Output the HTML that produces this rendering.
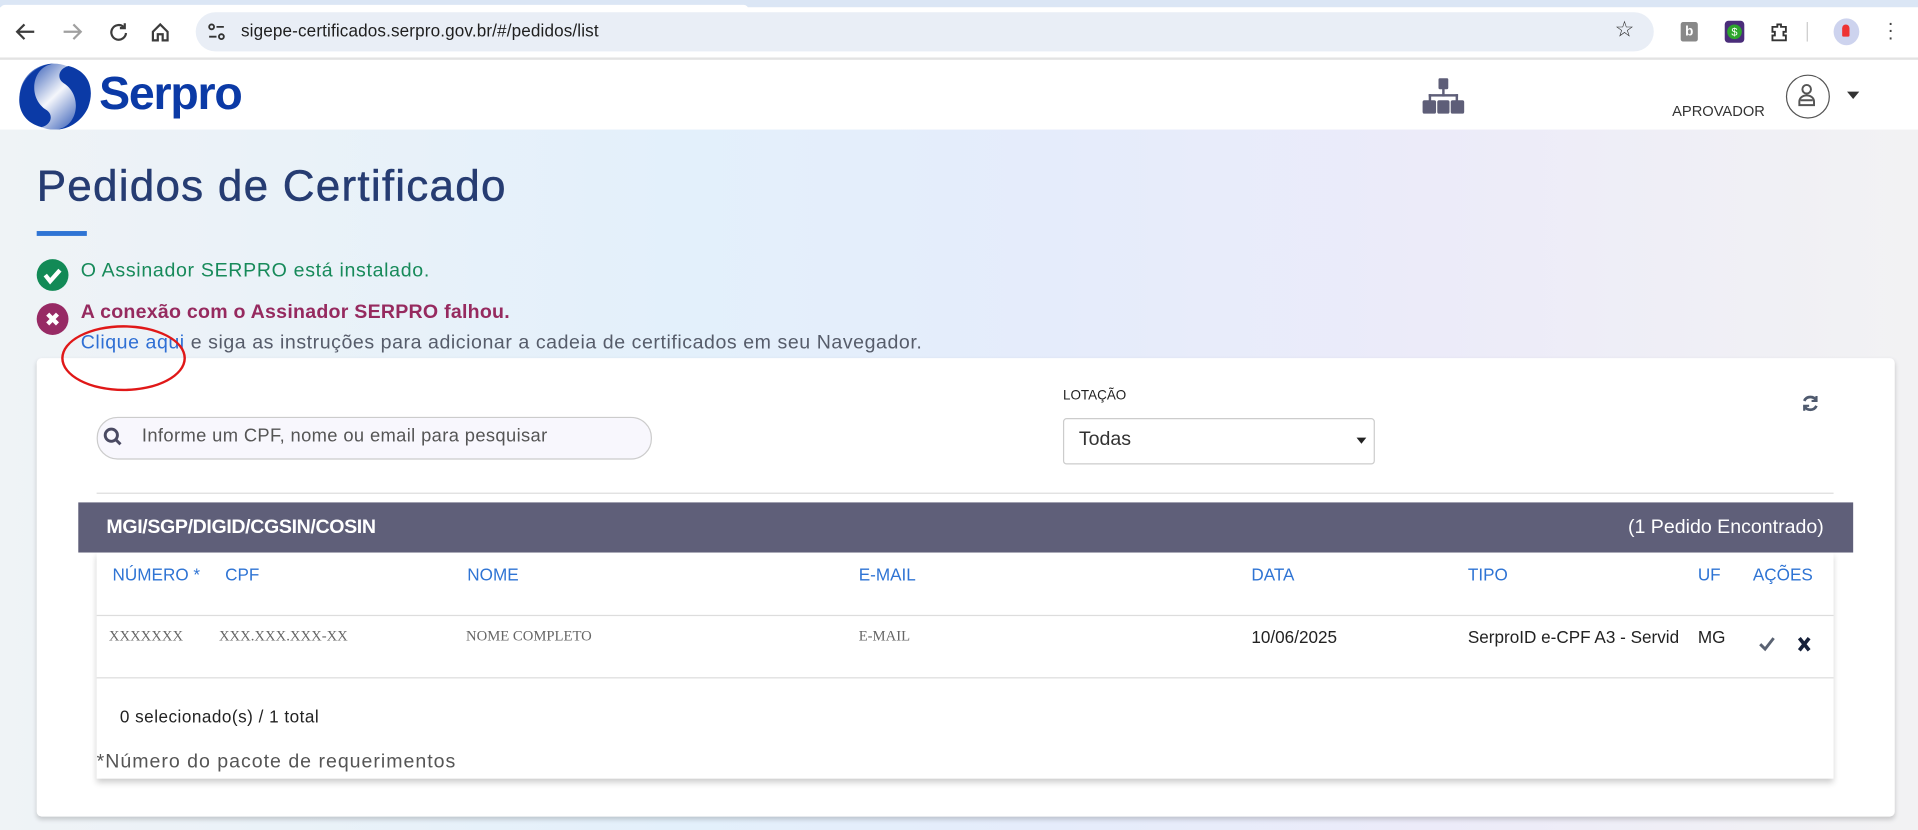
<!DOCTYPE html>
<html><head><meta charset="utf-8"><style>
html,body{margin:0;padding:0;width:1918px;height:830px;overflow:hidden;background:#fff}
#w{position:absolute;left:0;top:0;width:1568px;height:679px;transform:scale(1.22321,1.2224);transform-origin:0 0;font-family:"Liberation Sans",sans-serif;overflow:hidden}
.a{position:absolute;white-space:nowrap}
</style></head><body><div id="w">
<div class="a" style="left:0;top:0;width:1568px;height:6px;background:#dbe6f5"></div>
<div class="a" style="left:0;top:4px;width:612px;height:4px;background:#fff;border-radius:6px 6px 0 0"></div>
<div class="a" style="left:0;top:6px;width:1568px;height:42px;background:#fff"></div>
<div class="a" style="left:0;top:47px;width:1568px;height:2px;background:#e3e3e3"></div>
<svg class="a" style="left:10px;top:14px" width="140" height="24" viewBox="0 0 140 24" fill="none" stroke="#3c3c3c" stroke-width="1.8">
<path d="M18 12H5M10 6L4 12l6 6"/>
<path d="M42 12h13M50 6l6 6-6 6" stroke="#a0a0a0"/>
<path d="M91 8a6 6 0 1 0 2 5M92 5v4h-4"/>
<path d="M115 12l6-6 6 6v7h-4v-5h-4v5h-4z"/>
</svg>
<div class="a" style="left:160px;top:10px;width:1192px;height:32px;border-radius:16px;background:#e9eef6"></div>
<svg class="a" style="left:169px;top:18px" width="16" height="16" viewBox="0 0 16 16" fill="none" stroke="#333" stroke-width="1.5"><circle cx="4" cy="4" r="2"/><path d="M8 4h6M2 12h6"/><circle cx="12" cy="12" r="2"/></svg>
<div class="a" style="left:197px;top:17px;font-size:14px;color:#1f1f1f;letter-spacing:0.1px">sigepe-certificados.serpro.gov.br/#/pedidos/list</div>
<div class="a" style="left:1320px;top:14px;font-size:18px;color:#333">☆</div>
<div class="a" style="left:1374px;top:18px;width:14px;height:16px;background:#888;border-radius:2px;color:#fff;font-size:11px;font-weight:bold;text-align:center;line-height:16px">b</div>
<div class="a" style="left:1410px;top:17px;width:16px;height:18px;background:#4a2d7a;border-radius:3px"></div>
<div class="a" style="left:1412px;top:19px;width:12px;height:12px;background:#2da52d;border-radius:50%;color:#fff;font-size:9px;text-align:center;line-height:12px;margin-top:1px">$</div>
<svg class="a" style="left:1446px;top:17px" width="18" height="18" viewBox="0 0 18 18" fill="none" stroke="#333" stroke-width="1.5"><path d="M3 5h4V3h3v2h4v4h-2v3h2v4H3v-4h2V9H3z"/></svg>
<div class="a" style="left:1477px;top:18px;width:1px;height:16px;background:#ccc"></div>
<div class="a" style="left:1499px;top:15px;width:21px;height:22px;border-radius:50%;background:#cdd3ee"></div>
<div class="a" style="left:1506px;top:20px;width:6px;height:10px;background:#e33;border-radius:3px 3px 1px 1px"></div>
<div class="a" style="left:1543px;top:17px;font-size:16px;line-height:6px;color:#444">·<br>·<br>·</div>
<div class="a" style="left:0;top:49px;width:1568px;height:57px;background:#fff"></div>
<svg class="a" style="left:14px;top:50px" width="64" height="56" viewBox="0 0 64 56">
<defs><linearGradient id="g" x1="0" y1="0" x2="1" y2="1"><stop offset="0" stop-color="#0a3aa8"/><stop offset="0.5" stop-color="#f4f6fb"/><stop offset="1" stop-color="#0a3aa8"/></linearGradient></defs>
<ellipse cx="30" cy="29" rx="28" ry="27" fill="url(#g)"/>
<path d="M30 2C12 4 8 30 24 40c6 4 4 12-4 14C4 50-2 36 4 20 9 9 20 2 30 2z" fill="#0b3aa6"/>
<path d="M32 56c18-2 22-28 6-38-6-4-4-12 4-14 16 4 22 18 16 34C53 49 42 56 32 56z" fill="#0b3aa6"/>
</svg>
<div class="a" style="left:81px;top:56px;font-size:38px;font-weight:bold;color:#0b3aa6;letter-spacing:-1px">Serpro</div>
<svg class="a" style="left:1162px;top:62px" width="36" height="32" viewBox="0 0 36 32" fill="#5e5e78"><rect x="14" y="2" width="8" height="9" rx="1"/><rect x="17" y="10" width="2" height="7"/><rect x="6" y="15" width="24" height="2"/><rect x="6" y="15" width="2" height="6"/><rect x="28" y="15" width="2" height="6"/><rect x="1" y="20" width="11" height="11" rx="1.5"/><rect x="13" y="20" width="10" height="11" rx="1.5"/><rect x="24" y="20" width="11" height="11" rx="1.5"/></svg>
<div class="a" style="left:1367px;top:84px;font-size:12px;color:#333">APROVADOR</div>
<div class="a" style="left:1460px;top:61px;width:34px;height:34px;border:1px solid #555;border-radius:50%;background:#fff"></div>
<svg class="a" style="left:1468px;top:67px" width="18" height="22" viewBox="0 0 18 22" fill="none" stroke="#555" stroke-width="1.6"><circle cx="9" cy="6" r="3.5"/><path d="M3 19v-3a6 5 0 0 1 12 0v3z"/><path d="M4 15h10"/></svg>
<div class="a" style="left:1510px;top:75px;width:0;height:0;border-left:5px solid transparent;border-right:5px solid transparent;border-top:6px solid #333"></div>
<div class="a" style="left:0;top:106px;width:1568px;height:573px;background:linear-gradient(90deg,#eff3f6 0%,#e3f0fb 35%,#e5ecfb 55%,#ecebf9 75%,#f2f2f3 100%)"></div>
<div class="a" style="left:30px;top:131px;font-size:36px;color:#263c72;letter-spacing:1px;-webkit-text-stroke:0.4px #263c72">Pedidos de Certificado</div>
<div class="a" style="left:30px;top:189px;width:41px;height:4px;background:#2f74d4"></div>
<div class="a" style="left:30px;top:212px;width:26px;height:26px;border-radius:50%;background:#128a56"></div>
<svg class="a" style="left:30px;top:212px" width="26" height="26"><path d="M7 13l4 5 8-9" stroke="#fff" stroke-width="3.5" fill="none"/></svg>
<div class="a" style="left:66px;top:213px;font-size:16px;color:#178a5a;letter-spacing:0.55px">O Assinador SERPRO está instalado.</div>
<div class="a" style="left:30px;top:248px;width:26px;height:26px;border-radius:50%;background:#972a64"></div>
<svg class="a" style="left:30px;top:248px" width="26" height="26"><path d="M9 9l8 8M17 9l-8 8" stroke="#fff" stroke-width="3.5"/></svg>
<div class="a" style="left:66px;top:247px;font-size:16px;font-weight:bold;color:#962a5f;letter-spacing:0.2px">A conexão com o Assinador SERPRO falhou.</div>
<div class="a" style="left:66px;top:272px;font-size:16px;color:#565c6a;letter-spacing:0.45px"><span style="color:#2f6fd4">Clique aqui</span> e siga as instruções para adicionar a cadeia de certificados em seu Navegador.</div>
<div class="a" style="left:30px;top:293px;width:1519px;height:375px;background:#fff;border-radius:4px;box-shadow:0 2px 4px rgba(0,0,0,.18)"></div>
<div class="a" style="left:50px;top:266px;width:98px;height:50px;border:2px solid #e01818;border-radius:50%;z-index:3"></div>
<div class="a" style="left:79px;top:341px;width:452px;height:33px;border:1px solid #ccc;border-radius:17px;background:#f8f7fd"></div>
<svg class="a" style="left:83px;top:348px" width="18" height="18" viewBox="0 0 18 18" fill="none" stroke="#4a4a62" stroke-width="2.4"><circle cx="8" cy="8" r="5"/><path d="M11.5 11.5l4 4"/></svg>
<div class="a" style="left:116px;top:348px;font-size:15px;color:#555;letter-spacing:0.3px">Informe um CPF, nome ou email para pesquisar</div>
<div class="a" style="left:869px;top:318px;font-size:11px;color:#222">LOTAÇÃO</div>
<div class="a" style="left:869px;top:342px;width:253px;height:36px;border:1px solid #ccc;border-radius:3px;background:#fff"></div>
<div class="a" style="left:882px;top:351px;font-size:16px;color:#333">Todas</div>
<div class="a" style="left:1109px;top:358px;width:0;height:0;border-left:4px solid transparent;border-right:4px solid transparent;border-top:5px solid #222"></div>
<svg class="a" style="left:1472px;top:322px" width="16" height="16" viewBox="0 0 16 16" fill="none" stroke="#4f5a6e" stroke-width="2.2"><path d="M13 6A5.5 5.5 0 0 0 3 6M3 10a5.5 5.5 0 0 0 10 0"/><path d="M13 2v4h-4M3 14v-4h4" stroke-width="1.8"/></svg>
<div class="a" style="left:79px;top:403px;width:1420px;height:1px;background:#ddd"></div>
<div class="a" style="left:79px;top:452px;width:1420px;height:185px;background:#fff;box-shadow:0 3px 5px rgba(0,0,0,.2)"></div>
<div class="a" style="left:64px;top:411px;width:1451px;height:41px;background:#5f5f79"></div>
<div class="a" style="left:87px;top:423px;font-size:16px;font-weight:bold;color:#fff;letter-spacing:-0.3px">MGI/SGP/DIGID/CGSIN/COSIN</div>
<div class="a" style="right:77px;top:423px;font-size:16px;color:#fff">(1 Pedido Encontrado)</div>
<div class="a" style="left:0;top:462px;font-size:14px;color:#2f74d4;width:1568px">
<span class="a" style="left:92px">NÚMERO *</span><span class="a" style="left:184px">CPF</span><span class="a" style="left:382px">NOME</span><span class="a" style="left:702px">E-MAIL</span><span class="a" style="left:1023px">DATA</span><span class="a" style="left:1200px">TIPO</span><span class="a" style="left:1388px">UF</span><span class="a" style="left:1433px">AÇÕES</span></div>
<div class="a" style="left:79px;top:503px;width:1420px;height:1px;background:#ddd"></div>
<div class="a" style="left:0;top:513px;font-size:12px;color:#666;font-family:'Liberation Serif',serif">
<span class="a" style="left:89px">XXXXXXX</span><span class="a" style="left:179px">XXX.XXX.XXX-XX</span><span class="a" style="left:381px">NOME COMPLETO</span><span class="a" style="left:702px">E-MAIL</span></div>
<div class="a" style="left:0;top:513px;font-size:14px;color:#222">
<span class="a" style="left:1023px">10/06/2025</span><span class="a" style="left:1200px">SerproID e-CPF A3 - Servid</span><span class="a" style="left:1388px">MG</span></div>
<svg class="a" style="left:1437px;top:519px" width="50" height="16"><path d="M2 8l4 4 7-9" stroke="#5a6272" stroke-width="2.4" fill="none"/><path d="M34 3l8 10M42 3l-8 10" stroke="#15203a" stroke-width="3"/></svg>
<div class="a" style="left:79px;top:554px;width:1420px;height:1px;background:#ddd"></div>
<div class="a" style="left:98px;top:578px;font-size:14px;color:#222;letter-spacing:0.4px">0 selecionado(s) / 1 total</div>
<div class="a" style="left:79px;top:615px;font-size:16px;color:#555;letter-spacing:0.8px">*Número do pacote de requerimentos</div>
</div></body></html>
